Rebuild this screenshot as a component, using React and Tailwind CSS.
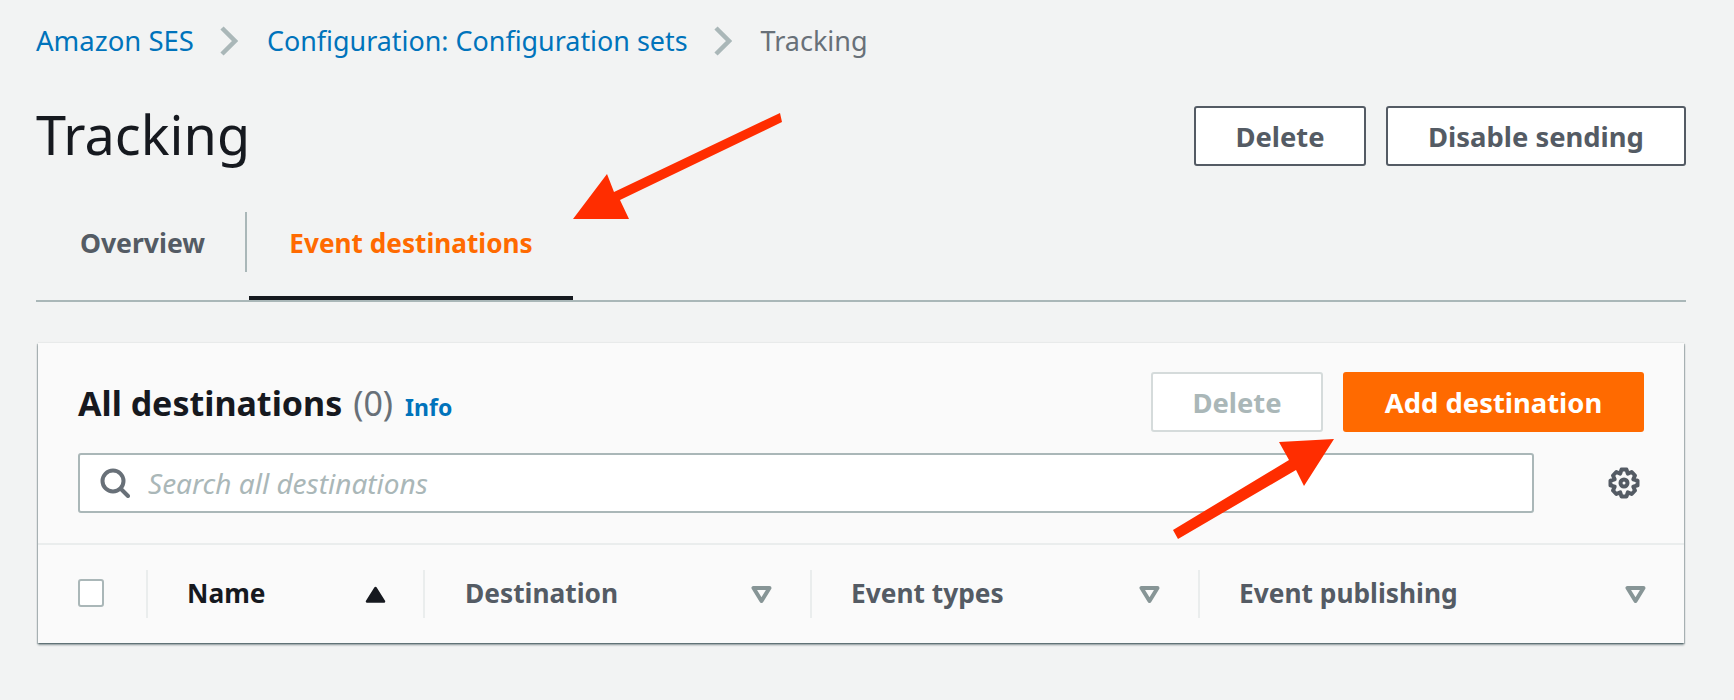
import React from "react";

const FONT = "font-['Noto_Sans','Open_Sans',sans-serif]";

const Chevron = () => (
  <svg width="18" height="30" viewBox="0 0 18 30" fill="none" className="shrink-0">
    <path d="M2 2 L15 15 L2 28" stroke="#aab7b8" strokeWidth="4.5" />
  </svg>
);

const SortDown = () => (
  <svg width="21" height="17" viewBox="0 0 21 17" fill="none" className="shrink-0">
    <path d="M2.5 2 H18.5 L10.5 15 Z" stroke="#879596" strokeWidth="4" strokeLinejoin="round" />
  </svg>
);

const SortUp = () => (
  <svg width="21" height="17" viewBox="0 0 21 17" className="shrink-0">
    <path d="M2 15.5 H19 L10.5 2 Z" fill="#16191f" stroke="#16191f" strokeWidth="2.5" strokeLinejoin="round" />
  </svg>
);

const SearchIcon = () => (
  <svg width="30" height="30" viewBox="0 0 30 30" fill="none" stroke="#687078" strokeWidth="4" className="shrink-0">
    <circle cx="13" cy="13" r="10.5" />
    <path d="M20.5 20.5 L28 28" strokeLinecap="round" />
  </svg>
);

const Gear = () => (
  <svg width="32" height="32" viewBox="0 0 32 32" fill="none" stroke="#545b64" strokeWidth="4" strokeLinejoin="round">
    <path d="M13.5 2.5 H18.5 L19.8 6.6 L23.7 5 L27 8.5 L25.3 12.3 L29.5 13.6 V18.4 L25.3 19.7 L27 23.5 L23.7 27 L19.8 25.4 L18.5 29.5 H13.5 L12.2 25.4 L8.3 27 L5 23.5 L6.7 19.7 L2.5 18.4 V13.6 L6.7 12.3 L5 8.5 L8.3 5 L12.2 6.6 Z" />
    <circle cx="16" cy="16" r="3.5" />
  </svg>
);

const Arrows = () => (
  <svg width="1734" height="700" viewBox="0 0 1734 700" className="absolute top-0 left-0 pointer-events-none">
    <path d="M780 113 L782 122 L620 200 L629 219 L573 219 L607 174 L614 192 Z" fill="#ff2d00" />
    <path d="M1173 530 L1178 539 L1296 470 L1304 486 L1334 439 L1279 442 L1289 460 Z" fill="#ff2d00" />
  </svg>
);

const Divider = () => <div className="w-[2px] h-[48px] bg-[#eaeded] shrink-0" />;

const HeaderCell = ({ label, width, dark, children }) => (
  <div className={`flex items-center justify-between shrink-0 ${width}`}>
    <span className={`text-[26.3px] font-bold ${dark ? "text-[#16191f]" : "text-[#545b64]"}`}>{label}</span>
    {children}
  </div>
);

const App = () => {
  return (
    <div className={`relative w-[1734px] h-[700px] overflow-hidden bg-[#f2f3f3] ${FONT}`}>
      <div className="pl-9 pr-[48px] pt-[21px]">
        <nav className="flex items-center h-[40px]">
          <a className="text-[27.5px] text-[#0073bb]">Amazon SES</a>
          <span className="ml-[26px] mr-[29px]"><Chevron /></span>
          <a className="text-[26.9px] text-[#0073bb]">Configuration: Configuration sets</a>
          <span className="ml-[26px] mr-[29px]"><Chevron /></span>
          <span className="text-[27px] text-[#687078]">Tracking</span>
        </nav>

        <div className="flex items-start justify-between mt-[45px] h-[78px]">
          <h1 className="text-[54px] leading-[56px] text-[#16191f]">Tracking</h1>
          <div className="flex gap-5">
            <button className="w-[172px] h-[60px] pt-[1px] bg-white border-2 border-[#545b64] rounded-[3px] text-[27.4px] font-bold text-[#545b64]">Delete</button>
            <button className="w-[300px] h-[60px] pt-[1px] bg-white border-2 border-[#545b64] rounded-[3px] text-[27.4px] font-bold text-[#545b64]">Disable sending</button>
          </div>
        </div>

        <div className="flex items-end h-[92px] mt-[26px] border-b-2 border-[#aab7b8]">
          <div className="w-[211px] h-[60px] mb-[28px] pt-[4px] pl-[4px] flex items-center justify-center border-r-2 border-[#aab7b8]">
            <span className="text-[26.6px] font-bold text-[#545b64]">Overview</span>
          </div>
          <div className="ml-[2px] w-[324px] h-full pb-[18px] flex items-center justify-center border-b-[4px] border-[#16191f]">
            <span className="text-[26.2px] font-bold text-[#ff6a00]">Event destinations</span>
          </div>
        </div>

        <div className="mt-[41px] ml-[2px] w-[1646px] h-[300px] bg-[#fafafa] shadow-[0_2px_2px_0_rgba(0,28,36,0.4),1px_1px_1px_0_rgba(0,28,36,0.2),-1px_1px_1px_0_rgba(0,28,36,0.2),0_-1px_1px_0_rgba(0,28,36,0.04)]">
          <div className="h-[202px] px-10 pt-[29px] border-b-2 border-[#eaeded]">
            <div className="flex items-center justify-between">
              <div className="flex items-baseline mt-[2px]">
                <h2 className="text-[34px] font-bold text-[#16191f]">All destinations</h2>
                <span className="text-[34px] text-[#687078] ml-[11px]">(0)</span>
                <a className="text-[23px] font-bold text-[#0073bb] ml-3">Info</a>
              </div>
              <div className="flex gap-5">
                <button className="w-[172px] h-[60px] pt-[1px] bg-white border-2 border-[#d5dbdb] rounded-[3px] text-[27.4px] font-bold text-[#aab7b8]">Delete</button>
                <button className="w-[301px] h-[60px] pt-[1px] bg-[#ff6a00] rounded-[3px] text-[27.4px] font-bold text-white">Add destination</button>
              </div>
            </div>
            <div className="flex items-center justify-between mt-[21px]">
              <div className="flex items-center w-[1456px] h-[60px] bg-white border-2 border-[#aab7b8] rounded-[3px] pl-5">
                <SearchIcon />
                <span className="ml-[18px] text-[28px] italic text-[#aab7b8]">Search all destinations</span>
              </div>
              <span className="mr-[4px] flex"><Gear /></span>
            </div>
          </div>

          <div className="flex items-center h-[98px] pl-10">
            <div className="w-[26px] h-[28px] -mt-[3px] bg-white border-2 border-[#aab7b8] rounded-[3px] shrink-0" />
            <div className="w-[42px]" />
            <Divider />
            <div className="w-[39px]" />
            <HeaderCell label="Name" width="w-[199px]" dark><SortUp /></HeaderCell>
            <div className="w-[37px]" />
            <Divider />
            <div className="w-[40px]" />
            <HeaderCell label="Destination" width="w-[307px]"><SortDown /></HeaderCell>
            <div className="w-[38px]" />
            <Divider />
            <div className="w-[39px]" />
            <HeaderCell label="Event types" width="w-[309px]"><SortDown /></HeaderCell>
            <div className="w-[38px]" />
            <Divider />
            <div className="w-[39px]" />
            <HeaderCell label="Event publishing" width="w-[407px]"><SortDown /></HeaderCell>
          </div>
        </div>
      </div>
      <Arrows />
    </div>
  );
};

export default App;
